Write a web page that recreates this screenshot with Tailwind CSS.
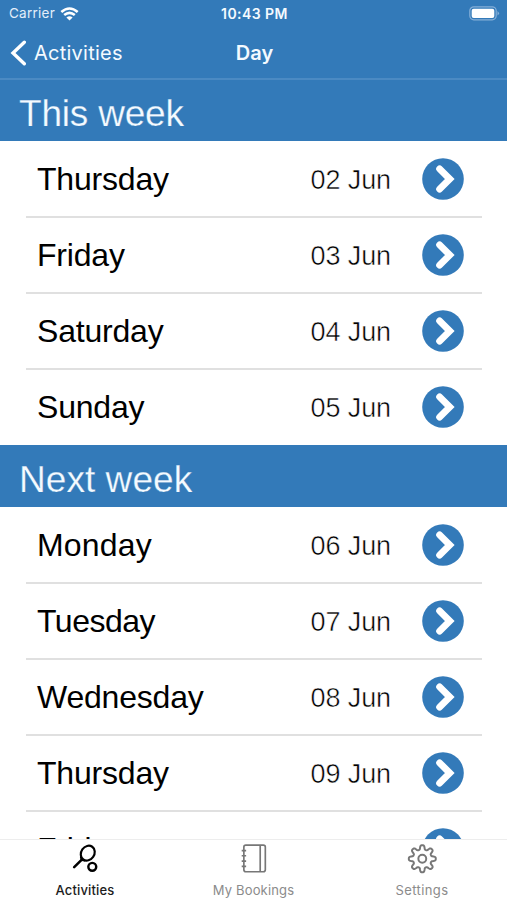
<!DOCTYPE html>
<html lang="en">
<head>
<meta charset="utf-8">
<title>Day</title>
<script src="https://cdn.jsdelivr.net/npm/@tailwindcss/browser@4"></script>
</head>
<body class="bg-white">
<svg class="hidden">
  <symbol id="go" viewBox="0 0 42 42"><circle cx="21" cy="21" r="20.8" fill="#337ab9"/><path d="M17.6 10.8 L27.8 21 L17.6 31.2" fill="none" stroke="#fff" stroke-width="6.8" stroke-linecap="round" stroke-linejoin="miter"/></symbol>
</svg>
<div class="flex h-[900px] w-[507px] flex-col overflow-hidden bg-white font-['Liberation_Sans',sans-serif]">
  <header class="h-[80px] shrink-0 border-b-2 border-[#4b8ac3] bg-[#337ab9] font-[Inter,sans-serif] text-[#f4faff]">
    <div class="grid h-[27px] grid-cols-3 items-center pl-[9px] pr-[7px] text-[13px]">
      <div class="flex items-center gap-[5px] text-[13.5px] tracking-[0.25px] text-[#e3eefa]"><span>Carrier</span>
        <svg class="h-[14px] w-[19px]" viewBox="0 0 19 14" fill="none" stroke="#fff" stroke-width="2.6"><path d="M1.3 5 Q9.5 -2 17.7 5"/><path d="M4.2 8.1 Q9.5 3.7 14.8 8.1"/><path d="M9.5 13.6 L6.4 10.5 Q9.5 8.2 12.6 10.5 Z" fill="#fff" stroke="none"/></svg>
      </div>
      <div class="text-center text-[14px] font-semibold tracking-[0.45px]">10:43 PM</div>
      <svg class="h-[15px] w-[31px] justify-self-end" viewBox="0 0 31 15"><rect x=".8" y=".8" width="26.4" height="13" rx="4" fill="none" stroke="#85afd8" stroke-width="1.2"/><rect x="2.7" y="2.7" width="22.6" height="9.2" rx="2" fill="#fff"/><path d="M28.5 5 Q31.5 7.3 28.5 9.6Z" fill="#85afd8"/></svg>
    </div>
    <div class="grid h-[51px] grid-cols-3 items-center pl-[10px] pr-[8px] text-[20px]">
      <div class="flex items-center gap-[8px]">
        <svg class="h-[26px] w-[16px]" viewBox="0 0 16 26" fill="none" stroke="#fff" stroke-width="3.4" stroke-linecap="round"><path d="M14.3 2.2 L3 13 L14.3 23.8"/></svg>
        <span class="tracking-[0.25px]">Activities</span>
      </div>
      <div class="text-center font-semibold">Day</div>
    </div>
  </header>
  <main class="min-h-0 flex-1 overflow-hidden" id="list"></main>
  <nav class="flex h-[61px] shrink-0 border-t border-[#ededed] bg-white font-[Inter,sans-serif] text-[13px] tracking-[0.15px] text-[#8b8b8b]">
    <div class="flex w-[170px] flex-col items-center text-[#1c1c1c]">
      <svg class="mt-[2px] h-[32px] w-[32px]" viewBox="0 0 32 32" fill="none" stroke="#000" stroke-linecap="round"><ellipse cx="18.8" cy="11.3" rx="6.7" ry="7.9" transform="rotate(35 18.8 11.3)" stroke-width="2.2"/><path d="M13 17.7 L5 25.5" stroke-width="2.6"/><path d="M11.8 15.2 L12.5 18.2 L15.5 18.9" stroke-width="2"/><circle cx="23.4" cy="25.2" r="4" stroke-width="2.5"/></svg>
      <span class="mt-[7px] font-medium">Activities</span>
    </div>
    <div class="flex w-[167px] flex-col items-center">
      <svg class="mt-[2px] h-[32px] w-[32px]" viewBox="0 0 32 32" fill="none" stroke="#777" stroke-width="1.7"><rect x="5.7" y="3.2" width="21.8" height="27" rx="2"/><path d="M22.3 3.2V30.2M3.5 8.7h4.5M3.5 14h4.5M3.5 19.4h4.5M3.5 24.7h4.5"/></svg>
      <span class="mt-[7px]">My Bookings</span>
    </div>
    <div class="flex w-[170px] flex-col items-center">
      <svg class="mt-[2px] h-[32px] w-[32px]" viewBox="0 0 32 32" fill="none" stroke="#777" stroke-width="2" stroke-linejoin="round"><path id="gear"/><circle cx="16.3" cy="17" r="4"/></svg>
      <span class="mt-[7px] tracking-[0.4px]">Settings</span>
    </div>
  </nav>
</div>
<script>
const weeks = [
  ["This week", [["Thursday","02 Jun"],["Friday","03 Jun"],["Saturday","04 Jun"],["Sunday","05 Jun"]]],
  ["Next week", [["Monday","06 Jun"],["Tuesday","07 Jun"],["Wednesday","08 Jun"],["Thursday","09 Jun"],["Friday","10 Jun"]]]
];
document.getElementById("list").innerHTML = weeks.map(([title, days], i) => `
  <section>
    <h2 class="${i ? "h-[62px] pt-[8px] tracking-[0.05px]" : "h-[61px] pt-[7px] tracking-[-0.2px]"} bg-[#337ab9] pl-[19px] text-[37px] leading-[54px] text-[#f4faff] [-webkit-text-stroke:0.25px_#337ab9]">${title}</h2>
    <ul>${days.map(([d, t], j) => `
      <li class="flex h-[76px] items-center pl-[37px] pr-[43px] text-black relative">
        <span class="flex-1 text-[32px] leading-[40px] ${d === "Monday" ? "tracking-[0.2px]" : d === "Tuesday" ? "tracking-[-0.5px]" : "tracking-[-0.2px]"}">${d}</span>
        <span class="mr-[31px] pt-[2px] text-[27px] leading-[40px] tracking-[-0.1px] [-webkit-text-stroke:0.5px_white]">${t}</span>
        <svg class="h-[42px] w-[42px] -mt-px"><use href="#go"/></svg>
        ${j < days.length - 1 ? '<div class="absolute right-[25px] -bottom-px left-[26px] h-[2px] bg-[#e0e0e0]"></div>' : ""}
      </li>`).join("")}</ul>
  </section>`).join("");
// Eight rounded teeth around the hub
let p = "";
for (let k = 0; k < 128; k++) {
  const a = k / 128 * 2 * Math.PI, c = Math.cos(8 * a);
  const r = 11.6 + 2.1 * Math.tanh(2 * c) / Math.tanh(2);
  p += (k ? "L" : "M") + (16.3 + r * Math.cos(a)).toFixed(2) + " " + (17 + r * Math.sin(a)).toFixed(2);
}
document.getElementById("gear").setAttribute("d", p + "Z");
</script>
</body>
</html>
